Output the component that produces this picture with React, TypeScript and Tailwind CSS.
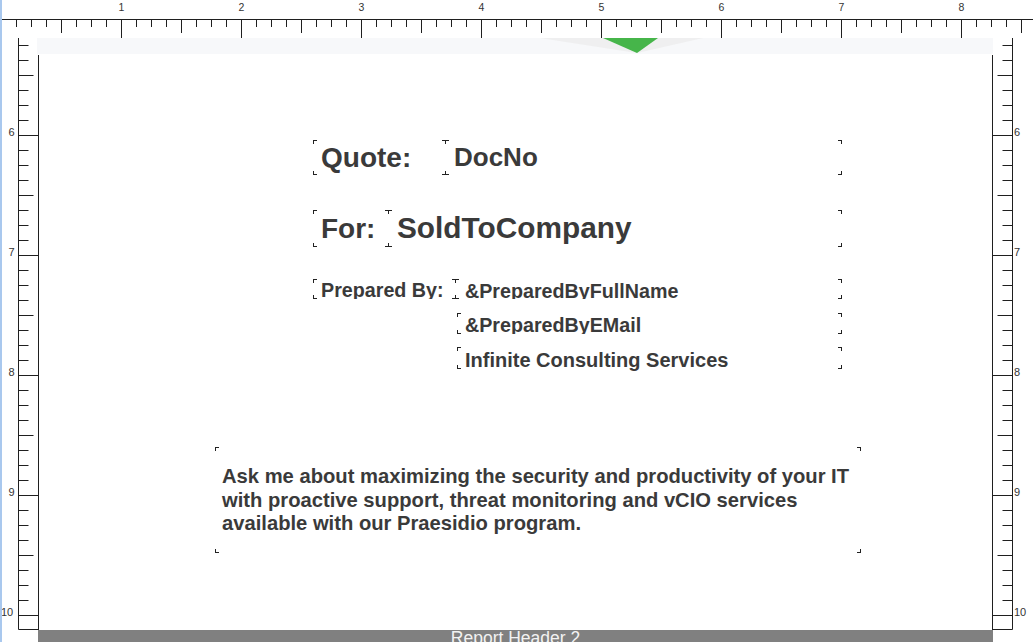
import React from "react";

const INK = "#1f1f1f";

// corner brackets around a report field
function Corners() {
  return (
    <>
      <span className="absolute left-0 top-0 w-[4px] h-[4px] border-l border-t border-[#222]" />
      <span className="absolute right-0 top-0 w-[4px] h-[4px] border-r border-t border-[#222]" />
      <span className="absolute left-0 bottom-0 w-[4px] h-[4px] border-l border-b border-[#222]" />
      <span className="absolute right-0 bottom-0 w-[4px] h-[4px] border-r border-b border-[#222]" />
    </>
  );
}

function Field({ className, textClass, children }: { className: string; textClass: string; children: React.ReactNode }) {
  return (
    <div className={"absolute " + className}>
      <Corners />
      <div className={"h-full whitespace-nowrap font-bold text-[#3a3a3a] " + textClass}>{children}</div>
    </div>
  );
}

function TopRuler() {
  const ticks = [];
  for (let k = 1; k <= 68; k++) {
    const x = 1.5 + 15 * k;
    const len = k % 8 === 0 ? 18 : k % 4 === 0 ? 13 : 7;
    ticks.push(<line key={k} x1={x} y1={20} x2={x} y2={20 + len} stroke={INK} strokeWidth={1} />);
  }
  const labels = [1, 2, 3, 4, 5, 6, 7, 8].map((n) => (
    <text key={n} x={1.5 + 120 * n} y={10.5} textAnchor="middle" fontSize={10.5} fill="#333" fontFamily="Liberation Sans, Arial, sans-serif">
      {n}
    </text>
  ));
  return (
    <svg width={1033} height={38} className="block shrink-0">
      <line x1={2} y1={19.5} x2={1033} y2={19.5} stroke={INK} strokeWidth={1} />
      {ticks}
      {labels}
    </svg>
  );
}

function SideRuler({ side }: { side: "left" | "right" }) {
  const items = [];
  const base = side === "left" ? 18.5 : 19.5;
  for (let k = 3; k <= 41; k++) {
    const y = 15 * k - 38 + 0.5;
    const inch = k % 8 === 1;
    const half = k % 8 === 5;
    const len = inch ? 20 : half ? 15 : 10;
    const x2 = side === "left" ? base + len : base - len;
    items.push(<line key={k} x1={base} y1={y} x2={x2} y2={y} stroke={INK} strokeWidth={1} />);
  }
  const labels = [6, 7, 8, 9, 10].map((n, i) => {
    const y = 135 + 120 * i - 38;
    return (
      <text
        key={n}
        x={side === "left" ? (n === 10 ? 7 : 11.5) : 21}
        y={y + 0.5}
        textAnchor={side === "left" ? "middle" : "start"}
        fontSize={11}
        fill="#333"
        fontFamily="Liberation Sans, Arial, sans-serif"
      >
        {n}
      </text>
    );
  });
  const end = 629 - 38 + 0.5;
  return (
    <svg width={side === "left" ? 38 : 40} height={604} className="block shrink-0">
      <line x1={base} y1={0} x2={base} y2={end} stroke={INK} strokeWidth={1} />
      <line x1={base} y1={end} x2={side === "left" ? 38 : 0} y2={end} stroke={INK} strokeWidth={1} />
      {items}
      {labels}
    </svg>
  );
}

export default function App() {
  return (
    <div className="relative w-[1033px] h-[642px] overflow-hidden bg-white font-['Liberation_Sans',Arial,sans-serif] border-l-2 border-[#a9c8ee]">
      <div className="-ml-[2px]">
        <TopRuler />
        <div className="flex h-[604px]">
          <SideRuler side="left" />
          <div className="w-[955px] shrink-0 flex flex-col">
            {/* band handle strip */}
            <div className="relative shrink-0 h-[16px] -ml-px bg-[#f7f8fa]">
              <svg width={955} height={16} className="absolute left-0 top-0">
                <polygon points="503,0 666,0 600,15" fill="#ebebeb" opacity={0.7} />
                <polygon points="566,0 621,0 600,15" fill="#46b54a" />
              </svg>
            </div>
            <div className="shrink-0 h-px" />
            {/* report band: a free design canvas, fields sit at their designed coordinates */}
            <div className="relative shrink-0 h-[575px] border-x border-[#1f1f1f]">
              <Field className="left-[274px] top-[85px] w-[133px] h-[35px]" textClass="pl-[8px] pt-[4px] text-[28px] leading-[28px]">
                Quote:
              </Field>
              <Field className="left-[406px] top-[85px] w-[397px] h-[35px]" textClass="pl-[9px] pt-[4px] text-[26px] leading-[26px]">
                DocNo
              </Field>
              <Field className="left-[274px] top-[155px] w-[76px] h-[37px]" textClass="pl-[8px] pt-[5px] text-[28px] leading-[28px]">
                For:
              </Field>
              <Field className="left-[349px] top-[155px] w-[454px] h-[37px]" textClass="pl-[9px] pt-[3px] text-[29.8px] leading-[30px]">
                SoldToCompany
              </Field>
              <Field className="left-[274px] top-[224px] w-[143px] h-[20px]" textClass="overflow-hidden pl-[8px] pt-[2px] text-[19.7px] leading-[19px]">
                Prepared By:
              </Field>
              <Field className="left-[416px] top-[224px] w-[387px] h-[20px]" textClass="overflow-hidden pl-[10px] pt-[3px] text-[19.7px] leading-[19px]">
                &amp;PreparedByFullName
              </Field>
              <Field className="left-[418px] top-[258px] w-[385px] h-[21px]" textClass="overflow-hidden pl-[8px] pt-[3px] text-[19.7px] leading-[19px]">
                &amp;PreparedByEMail
              </Field>
              <Field className="left-[418px] top-[292px] w-[385px] h-[22px]" textClass="pl-[8px] pt-[3px] text-[20px] leading-[20px]">
                Infinite Consulting Services
              </Field>
              <div className="absolute left-[176px] top-[392px] w-[646px] h-[106px]">
                <Corners />
                <p className="pl-[7px] pt-[18px] w-[645px] font-bold text-[20.2px] leading-[23.5px] text-[#3a3a3a]">
                  Ask me about maximizing the security and productivity of your IT with proactive support, threat monitoring and vCIO services available with our Praesidio program.
                </p>
              </div>
            </div>
            <div className="shrink-0 h-[20px] bg-[#808080] text-center text-[17.5px] leading-[17px] text-[#f2f2f2]">Report Header 2</div>
          </div>
          <SideRuler side="right" />
        </div>
      </div>
    </div>
  );
}
